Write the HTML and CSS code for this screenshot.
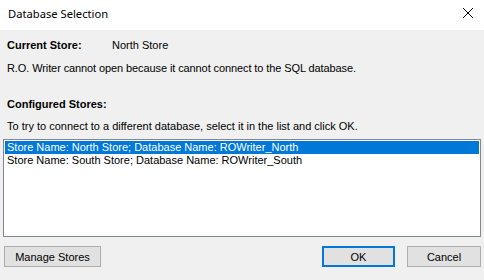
FILE: index.html
```html
<!DOCTYPE html>
<html>
<head>
<meta charset="utf-8">
<link rel="stylesheet" href="styles.css">
</head>
<body>
<div class="dialog">
  <div class="titlebar">
    <span class="title">Database Selection</span>
    <svg class="close" width="12" height="12" viewBox="0 0 12 12"><path d="M1 1 L11 11 M11 1 L1 11" stroke="#000" stroke-width="1"/></svg>
  </div>
  <div class="content">
    <div class="row current">
      <span class="label">Current Store:</span>
      <span class="value">North Store</span>
    </div>
    <div class="msg">R.O. Writer cannot open because it cannot connect to the SQL database.</div>
    <div class="label configured">Configured Stores:</div>
    <div class="msg hint">To try to connect to a different database, select it in the list and click OK.</div>
    <div class="listbox">
      <div class="item selected">Store Name: North Store; Database Name: ROWriter_North</div>
      <div class="item">Store Name: South Store; Database Name: ROWriter_South</div>
    </div>
    <div class="buttons">
      <button class="btn manage">Manage Stores</button>
      <div class="spacer"></div>
      <button class="btn ok">OK</button>
      <button class="btn cancel">Cancel</button>
    </div>
  </div>
</div>
</body>
</html>
```
FILE: styles.css
```css
html, body {
  margin: 0;
  padding: 0;
}
body {
  width: 484px;
  height: 280px;
  overflow: hidden;
  background: #f0f0f0;
  font-family: "Liberation Sans", Arial, sans-serif;
  font-size: 11px;
  color: #000;
}
.dialog {
  display: flex;
  flex-direction: column;
  height: 280px;
}
.titlebar {
  height: 30px;
  background: #fff;
  display: flex;
  align-items: center;
  justify-content: space-between;
  padding: 0 10px 0 8px;
}
.title {
  font-family: "Noto Sans", "Open Sans", sans-serif;
  font-size: 11.2px;
  margin-top: -3px;
}
.close {
  display: block;
  margin-top: -5px;
}
.content {
  flex: 1;
  display: flex;
  flex-direction: column;
  padding: 8px 3px 0 3px;
}
.row {
  display: flex;
}
.current {
  padding-left: 4px;
  height: 14px;
  line-height: 14px;
}
.label {
  font-weight: bold;
  width: 105px;
}
.msg {
  padding-left: 4px;
  height: 14px;
  line-height: 14px;
  margin-top: 9px;
  letter-spacing: -0.1px;
}
.configured {
  padding-left: 4px;
  width: auto;
  height: 14px;
  line-height: 14px;
  margin-top: 22px;
}
.hint {
  margin-top: 8px;
  letter-spacing: 0;
}
.listbox {
  margin-top: 6px;
  height: 98px;
  border: 1px solid #828790;
  background: #fff;
  padding: 1px;
  box-sizing: border-box;
}
.item {
  height: 13px;
  line-height: 13px;
  padding-left: 2px;
  white-space: nowrap;
}
.item.selected {
  background: #0078d7;
  color: #fff;
}
.buttons {
  display: flex;
  margin-top: 9px;
  padding-left: 1px;
}
.spacer {
  flex: 1;
}
.btn {
  height: 21px;
  box-sizing: border-box;
  border: 1px solid #adadad;
  background: #e1e1e1;
  font-family: "Liberation Sans", Arial, sans-serif;
  font-size: 11px;
  color: #000;
  padding: 0;
  margin: 0;
}
.manage {
  width: 97px;
}
.ok {
  width: 73px;
  border: 2px solid #0078d7;
  margin-right: 12px;
}
.cancel {
  width: 74px;
  margin-right: 0;
}
```
